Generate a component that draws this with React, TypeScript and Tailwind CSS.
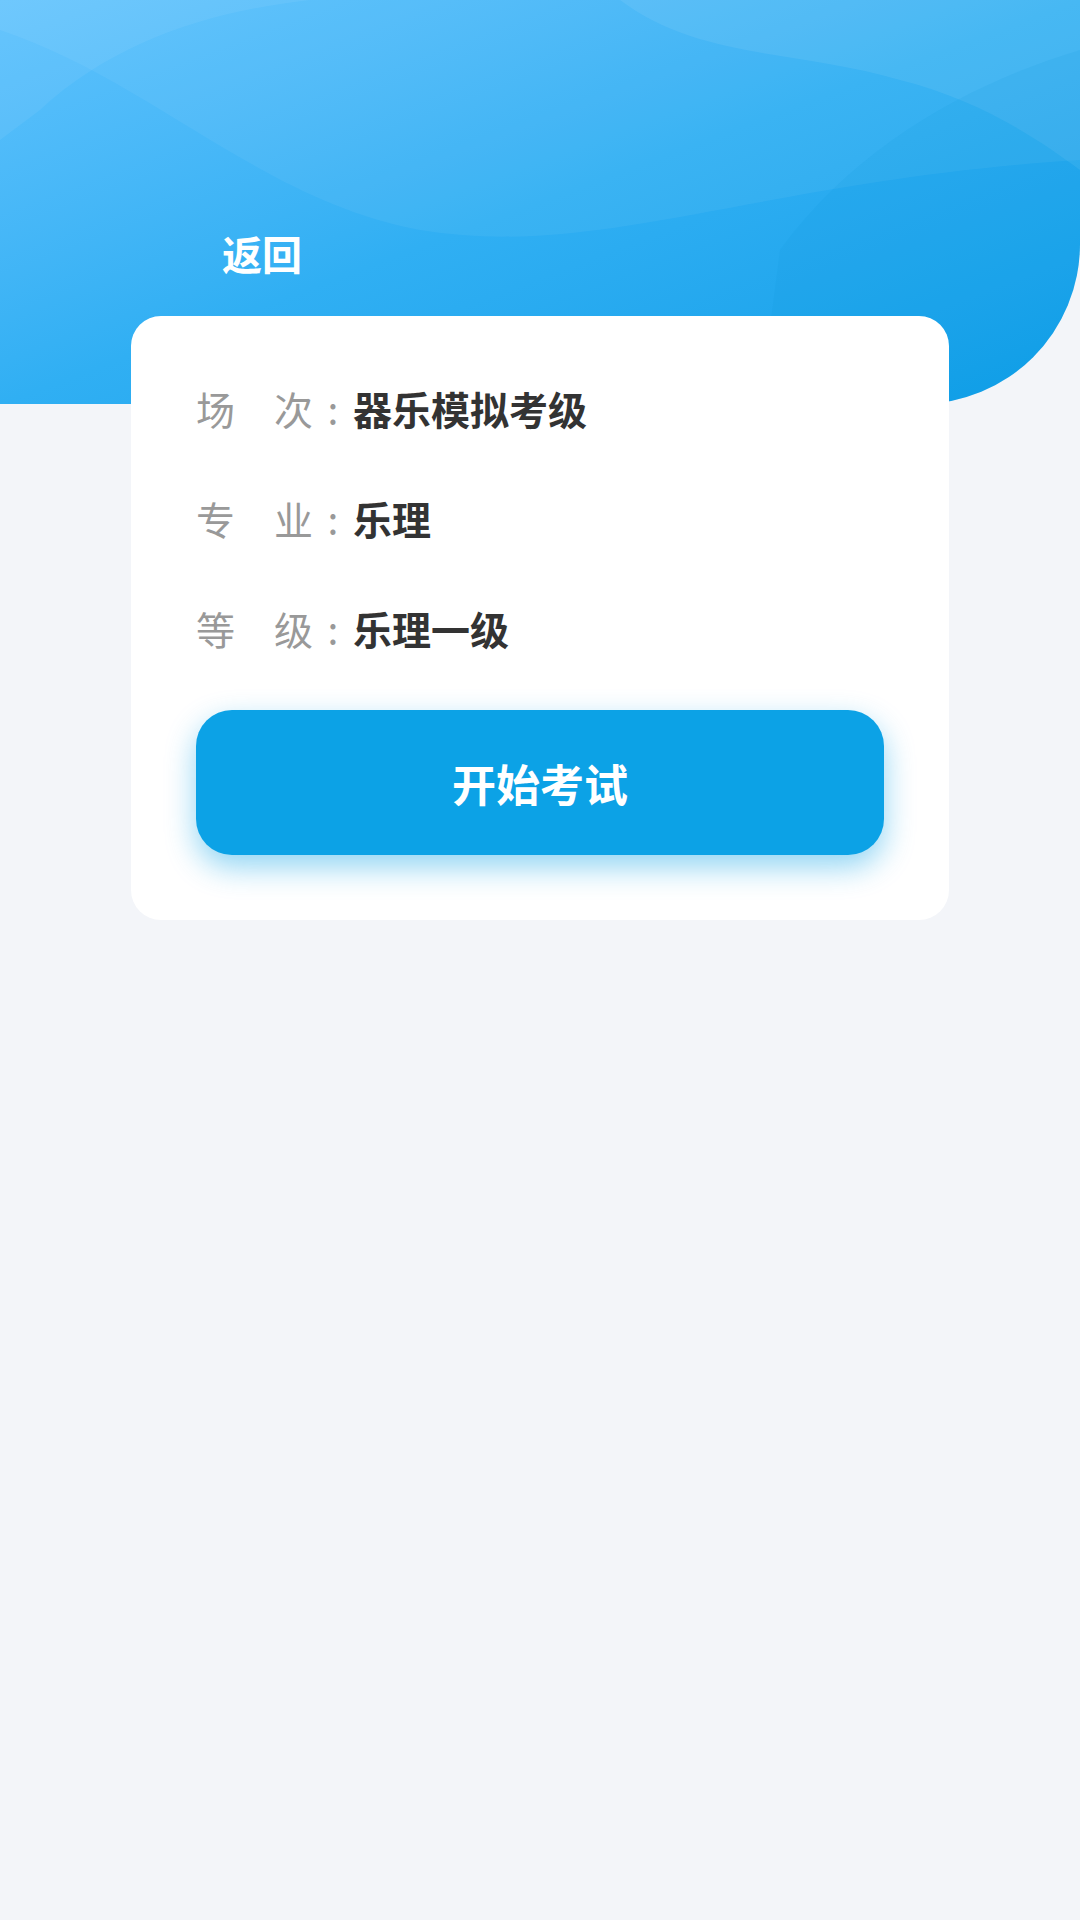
import React from "react";

const rows = [
  { label: "场\u3000次", value: "器乐模拟考级" },
  { label: "专\u3000业", value: "乐理" },
  { label: "等\u3000级", value: "乐理一级" },
];

export default function App() {
  return (
    <div
      className="min-h-[1920px] w-[1080px] bg-[#f3f5f9]"
      style={{ fontFamily: '"Noto Sans CJK SC", "Noto Sans", sans-serif' }}
    >
      <div className="relative h-[404px] w-[1080px] overflow-hidden rounded-br-[160px] bg-gradient-to-br from-[#5ec2fd] via-[#30aff3] to-[#0c9fe8]">
        <svg
          className="absolute inset-0"
          width="1080"
          height="404"
          viewBox="0 0 1080 404"
        >
          <path
            d="M0 30 C 150 80, 260 200, 420 230 C 600 260, 760 180, 1080 160 L1080 0 L0 0 Z"
            fill="#ffffff"
            opacity="0.05"
          />
          <path
            d="M40 110 C 180 -20, 400 -10, 540 0 L 0 0 L0 140 Z"
            fill="#ffffff"
            opacity="0.06"
          />
          <path
            d="M620 0 C 700 60, 800 50, 900 80 C 980 100, 1040 140, 1080 170 L1080 0 Z"
            fill="#ffffff"
            opacity="0.07"
          />
          <path
            d="M780 250 C 860 140, 980 80, 1080 50 L1080 404 L760 404 Z"
            fill="#0b8fdc"
            opacity="0.1"
          />
        </svg>
        <div className="relative pl-[222px] pt-[233px] text-[40px] font-bold leading-[40px] text-white">
          返回
        </div>
      </div>

      <div className="relative -mt-[88px] ml-[131px] w-[818px] rounded-[30px] bg-white px-[65px] pb-[65px] pt-[68px]">
        <div className="flex flex-col gap-[62px]">
          {rows.map((r) => (
            <div key={r.value} className="flex h-[48px] items-center text-[39px] leading-[48px]">
              <span className="text-[#999999]">{r.label}</span>
              <span className="w-[40px] text-center text-[#999999]">:</span>
              <span className="font-bold text-[#333333]">{r.value}</span>
            </div>
          ))}
        </div>
        <button className="mt-[58px] flex h-[145px] w-full items-center justify-center rounded-[36px] bg-[#0ca2e6] text-[44px] font-bold text-white shadow-[0_12px_30px_rgba(12,162,230,0.45)]">
          开始考试
        </button>
      </div>
    </div>
  );
}
